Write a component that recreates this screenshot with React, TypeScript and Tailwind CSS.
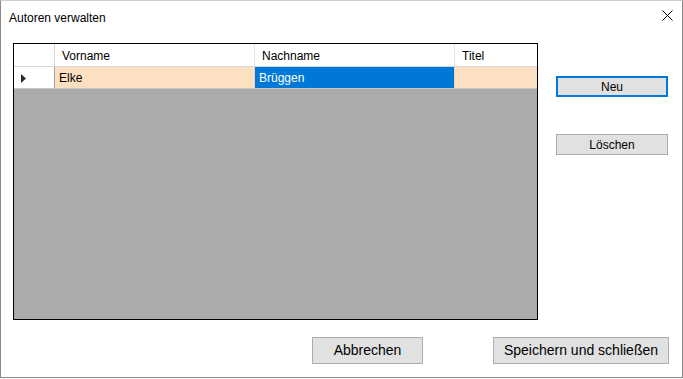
export default function App() {
  const cellFont = "font-['Liberation_Sans',Arial,sans-serif]";

  return (
    <div className={`w-[683px] h-[379px] bg-white text-black ${cellFont}`}>
      <div className="h-[378px] flex flex-col border border-[#8a8a8a] border-t-[#cfcfcf] bg-white">
        {/* TITLE BAR */}
        <div className="h-[32px] flex items-start justify-between pl-[8px] pr-[9px]">
          <span className="text-[12px] leading-[14px] mt-[10px]">Autoren verwalten</span>
          <svg className="mt-[9px]" width="11" height="11" viewBox="0 0 11 11">
            <path d="M0.5 0.5 L10.5 10.5 M10.5 0.5 L0.5 10.5" stroke="#000" strokeWidth="1" fill="none" />
          </svg>
        </div>

        {/* BODY */}
        <div className="flex pl-[12px] pt-[10px]">
          {/* DATA GRID */}
          <div className="w-[525px] h-[277px] border border-black bg-[#ababab] flex flex-col">
            <div className="flex h-[23px] bg-white border-b border-[#d6d6d6] text-[12px]">
              <div className="w-[41px] border-r border-[#d6d6d6]" />
              <div className="w-[200px] border-r border-[#e3e3e3] pl-[7px] pt-[2px] flex items-center">Vorname</div>
              <div className="w-[200px] border-r border-[#e3e3e3] pl-[7px] pt-[2px] flex items-center">Nachname</div>
              <div className="flex-1 pl-[7px] pt-[2px] flex items-center">Titel</div>
            </div>
            <div className="flex h-[22px] border-b border-[#c8c8c8] text-[12px]">
              <div className="w-[41px] bg-white border-r border-[#a0a0a0] flex items-center pl-[7px] pt-[1px]">
                <svg width="5" height="9" viewBox="0 0 5 9">
                  <path d="M0 0 L5 4.5 L0 9 Z" fill="#2b2b2b" />
                </svg>
              </div>
              <div className="w-[200px] bg-[#fde0c2] border-r border-[#e8d2bb] pl-[4px] pt-[1px] flex items-center">Elke</div>
              <div className="w-[200px] bg-[#0078d7] text-white border-r border-[#e8d2bb] pl-[4px] pt-[1px] flex items-center">
                Brüggen
              </div>
              <div className="flex-1 bg-[#fde0c2]" />
            </div>
          </div>

          {/* SIDE BUTTONS */}
          <div className="ml-[18px] flex flex-col text-[12px]">
            <button className="mt-[33px] w-[112px] h-[21px] bg-[#e1e1e1] border-2 border-[#0078d7] flex items-center justify-center">
              Neu
            </button>
            <button className="mt-[37px] w-[112px] h-[21px] bg-[#e1e1e1] border border-[#adadad] flex items-center justify-center">
              Löschen
            </button>
          </div>
        </div>

        {/* BOTTOM BUTTONS */}
        <div className="flex justify-end pr-[13px] mt-[17px] gap-[70px] text-[14px]">
          <button className="w-[111px] h-[27px] bg-[#e1e1e1] border border-[#adadad] flex items-center justify-center">
            Abbrechen
          </button>
          <button className="w-[176px] h-[27px] bg-[#e1e1e1] border border-[#adadad] flex items-center justify-center">
            Speichern und schließen
          </button>
        </div>
      </div>
    </div>
  );
}
